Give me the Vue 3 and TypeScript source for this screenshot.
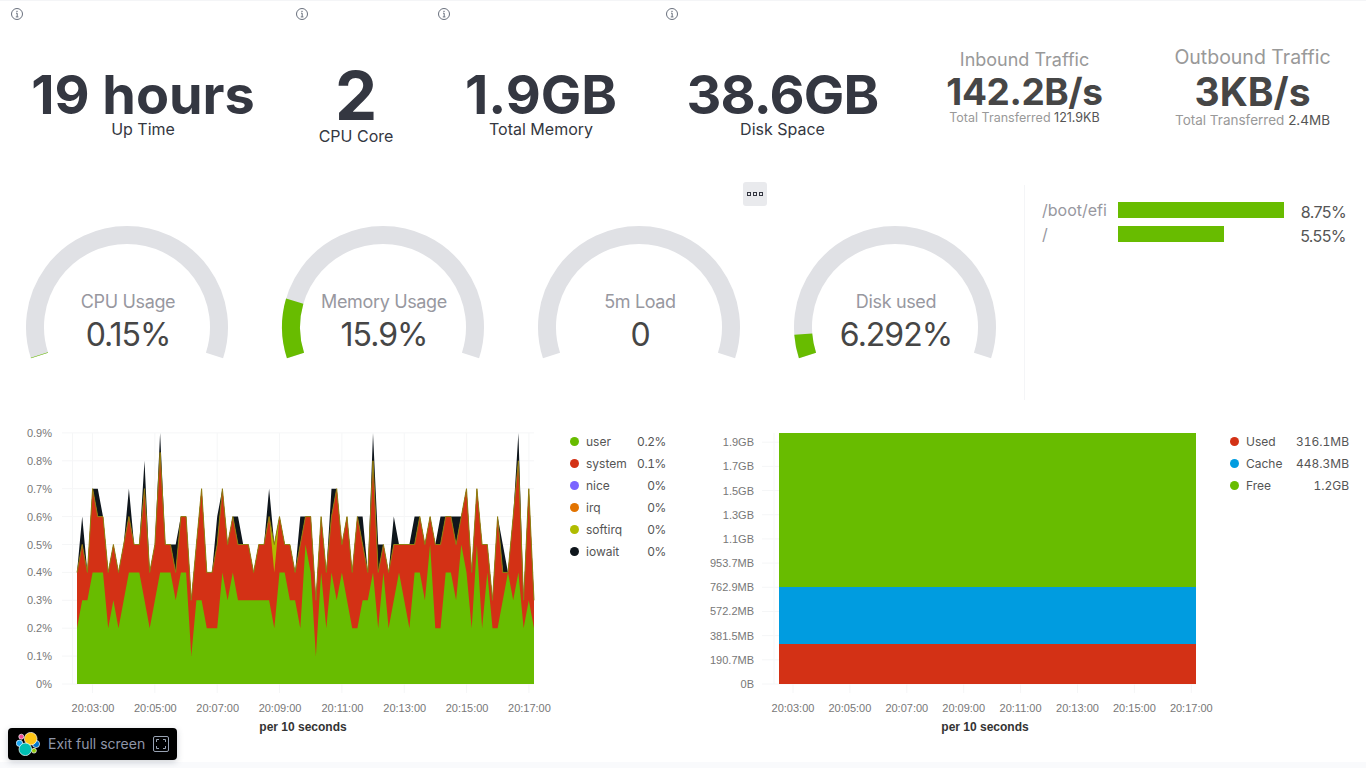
<script setup lang="ts">
const stats = [
  { title: 'Up Time', value: '19 hours', cls: 's55' },
  { title: 'CPU Core', value: '2', cls: 's67' },
  { title: 'Total Memory', value: '1.9GB', cls: 's55' },
  { title: 'Disk Space', value: '38.6GB', cls: 's55 tight' },
]
const traffic = [
  { title: 'Inbound Traffic', value: '142.2B/s', total: '121.9KB', cls: 'in' },
  { title: 'Outbound Traffic', value: '3KB/s', total: '2.4MB', cls: 'out' },
]
const CX = 109
const CY = 117
const R = 92
function pt(deg: number): string {
  const a = (deg * Math.PI) / 180
  return `${(CX + R * Math.cos(a)).toFixed(2)} ${(CY - R * Math.sin(a)).toFixed(2)}`
}
function arc(from: number, to: number): string {
  const large = from - to > 180 ? 1 : 0
  return `M${pt(from)} A${R} ${R} 0 ${large} 1 ${pt(to)}`
}
const gauges = [
  { label: 'CPU Usage', value: '0.15%', pct: 0.15 },
  { label: 'Memory Usage', value: '15.9%', pct: 15.9 },
  { label: '5m Load', value: '0', pct: 0 },
  { label: 'Disk used', value: '6.292%', pct: 6.292 },
].map((g) => ({
  ...g,
  track: arc(198, -18),
  fill: g.pct > 0 ? arc(198, 198 - (216 * g.pct) / 100) : '',
}))
const disks = [
  { name: '/boot/efi', width: 166, value: '8.75%' },
  { name: '/', width: 106, value: '5.55%' },
]
const u = [2,3,3,4,4,4,2,3,2,3,4,4,4,3,2,3,4,4,4,3,4,4,1,3,3,2,2,2,4,3,4,3,3,3,3,3,3,3,2,4,4,3,3,2,5,4,1,4,2,4,3,4,3,2,2,3,3,4,2,4,2,3,4,3,2,4,4,3,5,2,2,4,4,3,5,4,2,5,2,4,2,2,3,4,3,4,2,3,2]
const r = [4,5,4,7,6,6,4,5,4,5,6,5,5,7,4,5,8.3,5,5,4,6,6,3,5,7,4,4,5,7,5,6,5,5,5,4,5,5,6,4,6,5,5,4,5,6,6,3,6,4,6,7,5,6,4,6,5,4,8,4,5,4,5,5,5,5,5,6,5,6,5,5,6,6,5,6,7,4,7,5,5,3,6,4,4,6,8,3,7,3]
const b = [4,6,4,7,7,6,4,5,4,5,7,5,5,8,4,5,9,5,5,5,6,6,3,5,7,4,4,6,7,5,6,6,5,5,4,5,5,7,5,6,5,5,4,6,6,6,3,6,4,7,7,5,6,4,6,6,4,9,5,5,4,6,5,5,5,6,6,5,6,5,6,6,6,6,6,7,4,7,5,5,3,6,5,4,6,9,3,7,3]
const s = r.map((v, i) => (i === 38 ? 5 : i === 13 ? 7 : v))
const px = (i: number) => 77 + (i * 457) / 88
const py = (v: number) => 684 - v * 27.9
const line = (a: number[]) => a.map((v, i) => `${px(i).toFixed(1)},${py(v).toFixed(1)}`).join(' ')
const area = (a: number[]) => `77,684 ${line(a)} 534,684`
const layers = [
  { pts: area(b), fill: '#0f161c' },
  { pts: area(s), fill: '#b0bc00' },
  { pts: area(r), fill: '#d33115' },
  { pts: area(u), fill: '#68bc00' },
]
const softLine = line(s)
const times = ['20:03:00', '20:05:00', '20:07:00', '20:09:00', '20:11:00', '20:13:00', '20:15:00', '20:17:00']
const leftTicks = times.map((t, i) => ({ t, x: 92.5 + i * 62.35 }))
const rightTicks = times.map((t, i) => ({ t, x: 793 + i * 56.9 }))
const leftY = ['0%', '0.1%', '0.2%', '0.3%', '0.4%', '0.5%', '0.6%', '0.7%', '0.8%', '0.9%'].map((t, i) => ({ t, y: 684 - i * 27.9 }))
const rightY = ['0B', '190.7MB', '381.5MB', '572.2MB', '762.9MB', '953.7MB', '1.1GB', '1.3GB', '1.5GB', '1.7GB', '1.9GB'].map((t, i) => ({ t, y: 684 - i * 24.18 }))
const leftLegend = [
  { n: 'user', v: '0.2%', c: '#68bc00' },
  { n: 'system', v: '0.1%', c: '#d33115' },
  { n: 'nice', v: '0%', c: '#7b64ff' },
  { n: 'irq', v: '0%', c: '#e27300' },
  { n: 'softirq', v: '0%', c: '#b0bc00' },
  { n: 'iowait', v: '0%', c: '#0f161c' },
]
const rightLegend = [
  { n: 'Used', v: '316.1MB', c: '#d33115' },
  { n: 'Cache', v: '448.3MB', c: '#009ce0' },
  { n: 'Free', v: '1.2GB', c: '#68bc00' },
]
</script>

<template>
  <div class="page">
    <section class="stats">
      <div v-for="st in stats" :key="st.title" class="stat">
        <svg class="info" viewBox="0 0 14 14" width="14" height="14">
          <circle cx="7" cy="7" r="5.5" fill="none" stroke="#69707d" stroke-width="1" />
          <path d="M6 6.2h1.2v3.6M5.8 9.9h2.6" fill="none" stroke="#69707d" stroke-width="1" />
          <rect x="6.4" y="3.8" width="1.2" height="1.2" fill="#69707d" />
        </svg>
        <div class="num" :class="st.cls">{{ st.value }}</div>
        <div class="cap">{{ st.title }}</div>
      </div>
      <div v-for="t in traffic" :key="t.title" class="stat traffic" :class="t.cls">
        <div class="t-title">{{ t.title }}</div>
        <div class="t-num">{{ t.value }}</div>
        <div class="t-sub">Total Transferred <span>{{ t.total }}</span></div>
      </div>
    </section>

    <section class="mid">
      <div class="gauges">
        <svg v-for="g in gauges" :key="g.label" class="gauge" viewBox="0 0 220 180" width="220" height="180">
          <path :d="g.track" fill="none" stroke="#e0e1e5" stroke-width="18" />
          <path v-if="g.fill" :d="g.fill" fill="none" stroke="#68bc00" stroke-width="18" />
          <text x="110" y="98" class="g-label">{{ g.label }}</text>
          <text x="110" y="136" class="g-value">{{ g.value }}</text>
        </svg>
        <div class="menu"><i></i><i></i><i></i></div>
      </div>
      <div class="disks">
        <div v-for="d in disks" :key="d.name" class="disk">
          <span class="d-name">{{ d.name }}</span>
          <span class="d-track"><span class="d-bar" :style="{ width: d.width + 'px' }"></span></span>
          <span class="d-val">{{ d.value }}</span>
        </div>
      </div>
    </section>

    <section class="charts">
      <div class="chart left">
        <svg viewBox="0 410 560 330" width="560" height="330">
          <g class="grid">
            <line x1="72.5" y1="433" x2="72.5" y2="684" />
            <line v-for="y in leftY" :key="y.t" x1="62" :y1="y.y" x2="534" :y2="y.y" />
            <line v-for="x in leftTicks" :key="x.t" :x1="x.x" y1="433" :x2="x.x" y2="693" />
          </g>
          <text v-for="y in leftY" :key="y.t" x="52" :y="y.y + 4" class="axis end">{{ y.t }}</text>
          <text v-for="x in leftTicks" :key="x.t" :x="x.x + 0.5" y="712" class="axis mid-a">{{ x.t }}</text>
          <text x="303" y="731" class="axis-name">per 10 seconds</text>
          <polygon v-for="l in layers" :key="l.fill" :points="l.pts" :fill="l.fill" />
          <polyline :points="softLine" fill="none" stroke="#8f7d12" stroke-width="1" />
        </svg>
        <ul class="legend l1">
          <li v-for="i in leftLegend" :key="i.n">
            <b :style="{ background: i.c }"></b><span class="n">{{ i.n }}</span><span class="v">{{ i.v }}</span>
          </li>
        </ul>
      </div>
      <div class="chart right">
        <svg viewBox="690 410 530 330" width="530" height="330">
          <g class="grid">
            <line x1="774" y1="433" x2="774" y2="684" />
            <line v-for="y in rightY" :key="y.t" x1="762" :y1="y.y" x2="1196" :y2="y.y" />
            <line v-for="x in rightTicks" :key="x.t" :x1="x.x" y1="433" :x2="x.x" y2="693" />
          </g>
          <text v-for="y in rightY" :key="y.t" x="754" :y="y.y + 4" class="axis end">{{ y.t }}</text>
          <text v-for="x in rightTicks" :key="x.t" :x="x.x" y="712" class="axis mid-a">{{ x.t }}</text>
          <text x="985" y="731" class="axis-name">per 10 seconds</text>
          <rect x="779" y="433" width="417" height="154" fill="#68bc00" />
          <rect x="779" y="587" width="417" height="57" fill="#009ce0" />
          <rect x="779" y="644" width="417" height="40" fill="#d33115" />
        </svg>
        <ul class="legend l2">
          <li v-for="i in rightLegend" :key="i.n">
            <b :style="{ background: i.c }"></b><span class="n">{{ i.n }}</span><span class="v">{{ i.v }}</span>
          </li>
        </ul>
      </div>
    </section>

    <div class="foot"></div>

    <div class="exit">
      <svg class="logo" viewBox="0 0 24 24" width="24" height="24">
        <circle cx="5.3" cy="4.7" r="2.5" fill="#f04e98" stroke="#fff" stroke-width=".7" />
        <circle cx="3.5" cy="11.3" r="3.2" fill="#1ba9f5" stroke="#fff" stroke-width=".7" />
        <circle cx="20" cy="12" r="3.6" fill="#0077cc" stroke="#fff" stroke-width=".7" />
        <circle cx="18" cy="18.7" r="2.4" fill="#93c90e" stroke="#fff" stroke-width=".7" />
        <circle cx="14.7" cy="6.7" r="6.3" fill="#fec514" stroke="#fff" stroke-width=".7" />
        <circle cx="9.3" cy="17.3" r="6.3" fill="#00bfb3" stroke="#fff" stroke-width=".7" />
      </svg>
      <span class="exit-text">Exit full screen</span>
      <svg viewBox="0 0 16 16" width="16" height="16" class="fs">
        <rect x=".5" y=".5" width="15" height="15" rx="1.5" fill="none" stroke="#98a2b3" />
        <path d="M3.5 6V3.5H6M10 3.5h2.5V6M12.5 10v2.5H10M6 12.5H3.5V10" fill="none" stroke="#98a2b3" />
      </svg>
    </div>
  </div>
</template>

<style>
html, body { margin: 0; background: #fff; }
</style>

<style scoped>
.page {
  position: relative;
  width: 1366px;
  height: 768px;
  overflow: hidden;
  background: #fff;
  font-family: Inter, "Noto Sans", sans-serif;
  display: flex;
  flex-direction: column;
}
.stats {
  display: grid;
  grid-template-columns: 285px 142px 228px 255px 229px 227px;
  height: 170px;
  flex: none;
  border-top: 1px solid #f4f5f7;
  box-sizing: border-box;
}
.stat {
  position: relative;
  display: flex;
  flex-direction: column;
  align-items: center;
  color: #343741;
}
.stat:first-child { padding-left: 1px; }
.info { position: absolute; left: 10px; top: 6px; }
.num { font-weight: 700; line-height: 1; white-space: nowrap; }
.s55 { font-size: 54px; margin-top: 67px; height: 47px; }
.s67 { font-size: 67px; margin-top: 61px; height: 64px; }
.tight { letter-spacing: -0.8px; }
.cap { font-size: 16px; line-height: 20px; margin-top: 4px; white-space: nowrap; }
.s67 + .cap { margin-top: 0; }
.t-title { color: #999; white-space: nowrap; }
.t-num { font-weight: 700; color: #464646; white-space: nowrap; }
.t-sub { color: #999; white-space: nowrap; line-height: 16px; }
.t-sub span { color: #555; }
.in { padding-top: 48px; }
.in .t-title { font-size: 18px; line-height: 22px; }
.in .t-num { font-size: 37px; line-height: 42px; letter-spacing: -0.4px; }
.in .t-sub { font-size: 12.5px; margin-top: -3px; }
.out { padding-top: 44px; }
.out .t-title { font-size: 19.5px; line-height: 24px; }
.out .t-num { font-size: 39px; line-height: 46px; }
.out .t-sub { font-size: 13.5px; margin-top: -3px; }
.mid { display: flex; height: 240px; flex: none; }
.gauges {
  position: relative;
  width: 1024px;
  display: grid;
  grid-template-columns: repeat(4, 256px);
  justify-items: center;
  padding-top: 40px;
  box-sizing: border-box;
}
.gauge { display: block; }
.g-label { font-size: 18px; letter-spacing: -0.35px; fill: #98989f; text-anchor: middle; font-family: Inter, sans-serif; }
.g-value { font-size: 32px; letter-spacing: -1px; fill: #464646; text-anchor: middle; font-family: Inter, sans-serif; }
.menu {
  position: absolute;
  left: 743px;
  top: 12px;
  width: 24px;
  height: 24px;
  border-radius: 3px;
  background: #e9eaed;
  display: flex;
  align-items: center;
  justify-content: center;
  gap: 2px;
}
.menu i { display: block; width: 2px; height: 2px; border: 1px solid #343741; }
.disks {
  width: 342px;
  height: 215px;
  margin-top: 15px;
  border-left: 1px solid #f4f5f7;
  box-sizing: border-box;
  padding: 17px 20px 0 17px;
  display: flex;
  flex-direction: column;
  gap: 8px;
}
.disk { display: flex; align-items: center; height: 16px; font-size: 16px; }
.d-name { width: 76px; flex: none; color: #98989f; }
.d-track { width: 170px; flex: none; }
.d-bar { display: block; height: 16px; background: #68bc00; }
.d-val { margin-left: auto; color: #555; letter-spacing: -0.6px; padding-top: 4px; }
.charts { display: flex; height: 352px; flex: none; }
.chart { display: flex; }
.chart svg { display: block; flex: none; }
.left { width: 690px; }
.right { width: 676px; }
.grid line { stroke: #f5f6f7; stroke-width: 1; }
.axis { font-family: "Liberation Sans", Arial, sans-serif; font-size: 11px; fill: #777; }
.end { text-anchor: end; }
.mid-a { text-anchor: middle; }
.axis-name { font-family: "Liberation Sans", Arial, sans-serif; font-size: 12px; font-weight: 700; fill: #333; text-anchor: middle; }
.legend {
  list-style: none;
  margin: 20px 0 0;
  padding: 0;
  font-size: 12px;
  color: #555;
  font-variant-numeric: tabular-nums;
}
.legend li { display: flex; align-items: center; height: 22px; }
.legend b { width: 9px; height: 9px; border-radius: 50%; margin-right: 7px; flex: none; }
.legend .v { margin-left: auto; }
.l1 { width: 96px; margin-left: 10px; }
.l1 .v { letter-spacing: -0.4px; }
.l2 { width: 119px; margin-left: 10px; }
.foot { flex: 1; background: #f9fafc; }
.exit {
  position: absolute;
  left: 8px;
  top: 728px;
  width: 169px;
  height: 32px;
  background: #000;
  border-radius: 4px;
  box-shadow: 0 2px 6px rgba(60, 70, 90, .25);
  display: flex;
  align-items: center;
  font-size: 14px;
  color: #8f96a8;
  box-sizing: border-box;
  padding-left: 8px;
}
.exit-text { padding-bottom: 2px; }
.logo { flex: none; margin-right: 8px; }
.fs { margin-left: 8px; flex: none; }
</style>
